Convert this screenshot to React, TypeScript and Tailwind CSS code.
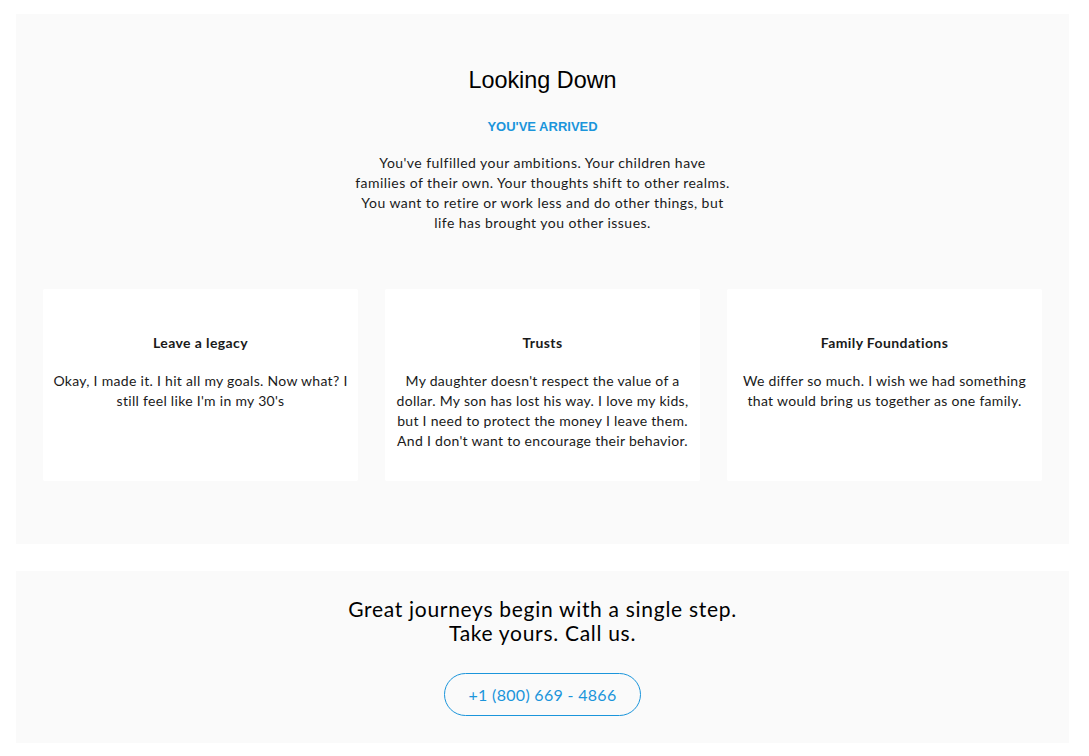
import React from "react";

const body = { fontFamily: "Lato, 'Noto Sans', sans-serif" };

function Card({ title, lines }: { title: string; lines: string[] }) {
  return (
    <div className="bg-white rounded-[2px] h-[192px] pt-[44px] px-[8px] text-center text-[#1a1a1a]">
      <div className="text-[14px] leading-[20px] font-bold tracking-[0.4px]">{title}</div>
      <div className="mt-[18px] text-[14px] leading-[20px] tracking-[0.3px]">
        {lines.map((l, i) => (
          <div key={i}>{l}</div>
        ))}
      </div>
    </div>
  );
}

export default function App() {
  return (
    <div className="bg-white min-h-[756px] pl-[16px] pr-[20px] pt-[14px] pb-[13px]" style={body}>
      <section className="bg-[#fafafa] pt-[50px] pb-[63px] px-[27px]">
        <h1
          className="text-center text-[23.4px] leading-[32px] text-black"
          style={{ fontFamily: "'Liberation Sans', Arial, sans-serif" }}
        >
          Looking Down
        </h1>
        <div
          className="mt-[21px] text-center text-[13px] leading-[20px] font-bold text-[#1b95db]"
          style={{ fontFamily: "'Liberation Sans', Arial, sans-serif" }}
        >
          YOU'VE ARRIVED
        </div>
        <div className="mt-[16px] text-center text-[14px] leading-[20px] text-[#1a1a1a] tracking-[0.45px]">
          <div>You've fulfilled your ambitions. Your children have</div>
          <div>families of their own. Your thoughts shift to other realms.</div>
          <div>You want to retire or work less and do other things, but</div>
          <div>life has brought you other issues.</div>
        </div>
        <div className="mt-[56px] grid grid-cols-3 gap-[27px]">
          <Card
            title="Leave a legacy"
            lines={["Okay, I made it. I hit all my goals. Now what? I", "still feel like I'm in my 30's"]}
          />
          <Card
            title="Trusts"
            lines={[
              "My daughter doesn't respect the value of a",
              "dollar. My son has lost his way. I love my kids,",
              "but I need to protect the money I leave them.",
              "And I don't want to encourage their behavior.",
            ]}
          />
          <Card
            title="Family Foundations"
            lines={["We differ so much. I wish we had something", "that would bring us together as one family."]}
          />
        </div>
      </section>
      <section className="mt-[27px] bg-[#fafafa] pt-[26px] pb-[27px] flex flex-col items-center">
        <div className="text-center text-[21px] leading-[24px] text-black tracking-[0.7px]">
          <div>Great journeys begin with a single step.</div>
          <div>Take yours. Call us.</div>
        </div>
        <a
          href="#"
          className="mt-[28px] w-[197px] h-[43px] rounded-full border border-[#1b95db] text-[#1b95db] text-[16px] flex items-center justify-center tracking-[0.3px]"
        >
          +1 (800) 669 - 4866
        </a>
      </section>
    </div>
  );
}
